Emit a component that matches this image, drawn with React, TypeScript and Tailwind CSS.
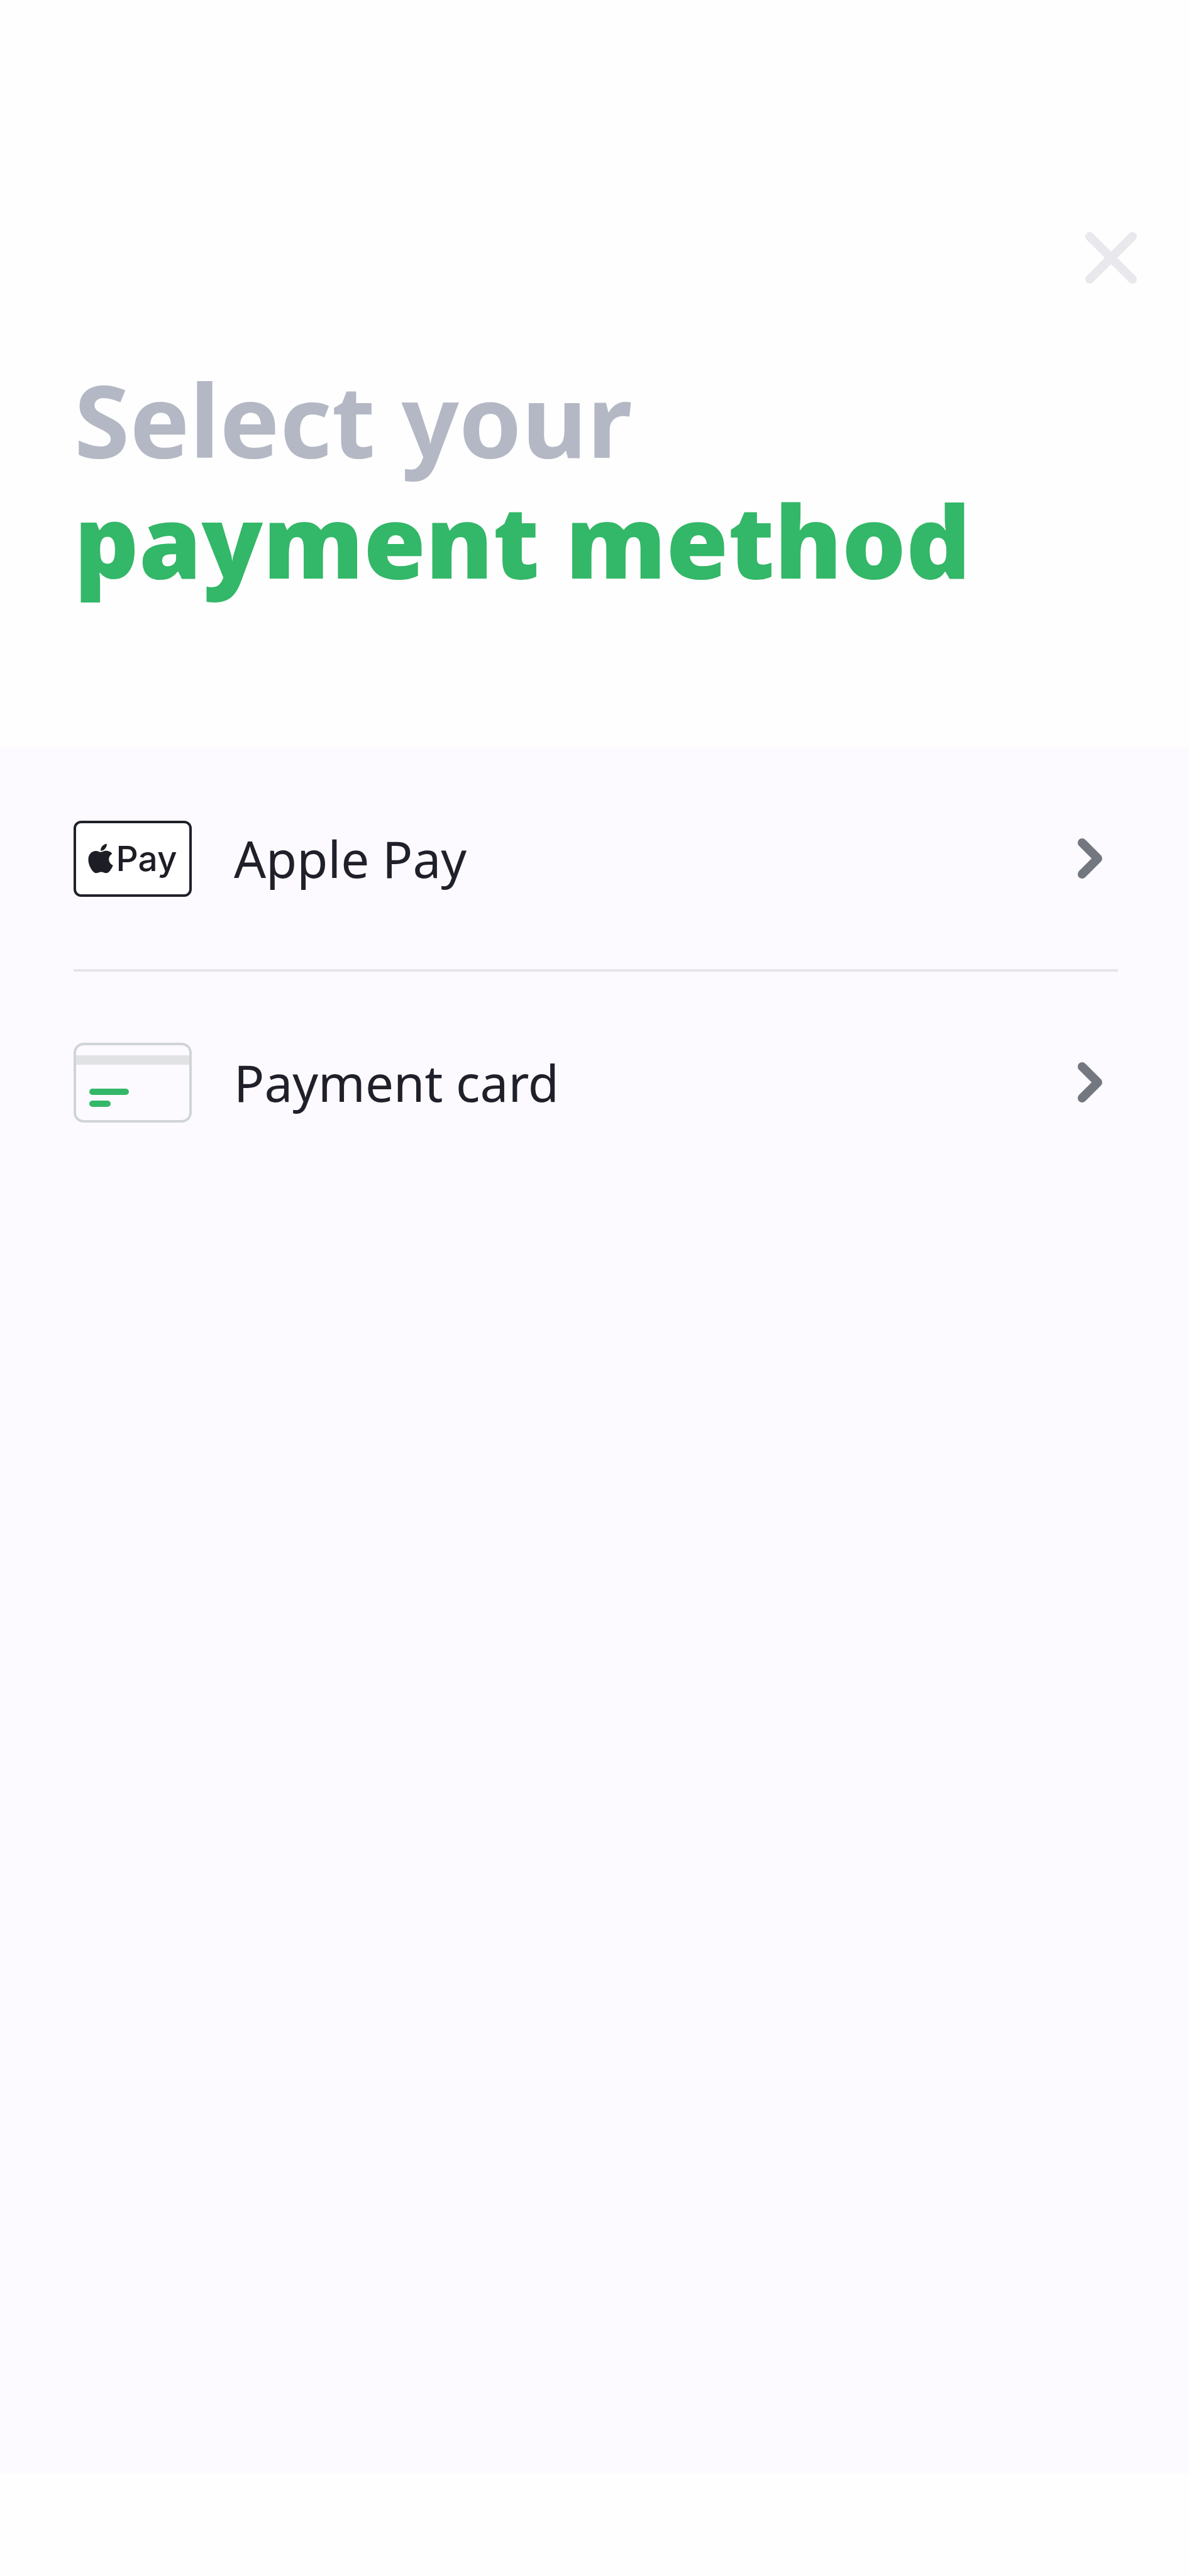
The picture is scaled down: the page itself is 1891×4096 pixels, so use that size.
import React from 'react';
import { FaApple } from 'react-icons/fa';

const methods = [
  { id: 'apple-pay', label: 'Apple Pay', icon: <ApplePayBadge /> },
  { id: 'card', label: 'Payment card', icon: <CardBadge /> },
];

function ApplePayBadge() {
  return (
    <span className="flex h-[121px] w-[188px] items-center justify-center rounded-[12px] border-4 border-[#20202a] bg-white text-[#1d1d25]">
      <FaApple className="h-[54px] w-[40px]" />
      <span className="pl-1 font-['Inter'] text-[55px] leading-none font-medium">Pay</span>
    </span>
  );
}

function CardBadge() {
  return (
    <svg className="h-[127px] w-[188px]" viewBox="0 0 188 127" fill="none">
      <rect x="2" y="20" width="184" height="15" fill="#e0e2e4" />
      <rect x="2" y="2" width="184" height="123" rx="14" stroke="#d0d4d7" strokeWidth="4" />
      <path d="M30 78h53M30 97h24" stroke="#34b768" strokeWidth="10" strokeLinecap="round" />
    </svg>
  );
}

function Chevron() {
  return (
    <svg className="h-[64px] w-[40px]" viewBox="0 0 40 64" fill="none">
      <path
        d="M7 7l25 25L7 57"
        stroke="#727780"
        strokeWidth="14"
        strokeLinecap="round"
        strokeLinejoin="round"
      />
    </svg>
  );
}

export default function App() {
  return (
    <div className="flex min-h-screen flex-col bg-[#fefefe] font-['Noto_Sans',sans-serif]">
      {/* HEADER */}
      <header className="pt-[368px] pb-[235px]">
        <div className="flex justify-end pr-[82px]">
          <button type="button" aria-label="Close">
            <svg className="block h-[84px] w-[84px]" viewBox="0 0 84 84" fill="none">
              <path
                d="M8 8l68 68M76 8L8 76"
                stroke="#e8e8ed"
                strokeWidth="14"
                strokeLinecap="round"
              />
            </svg>
          </button>
        </div>

        <h1 className="pt-[118px] pl-[118px] text-[160px] leading-[192px] whitespace-nowrap">
          <span className="block font-bold text-[#b3b8c4]">Select your</span>
          <span className="block font-black text-[#33b768]">payment method</span>
        </h1>
      </header>

      {/* METHODS */}
      <main className="flex-1 bg-[#fcfafe] pr-[113px] pl-[117px]">
        <ul className="divide-y-4 divide-[#e4e5e9]">
          {methods.map((m) => (
            <li key={m.id}>
              <button type="button" className="flex h-[352px] w-full items-center pr-[24px] text-left">
                {m.icon}
                <span className="flex-1 pl-[67px] text-[80px] leading-none text-[#20202a]">
                  {m.label}
                </span>
                <Chevron />
              </button>
            </li>
          ))}
        </ul>
      </main>

      <footer className="h-[163px]" />
    </div>
  );
}
